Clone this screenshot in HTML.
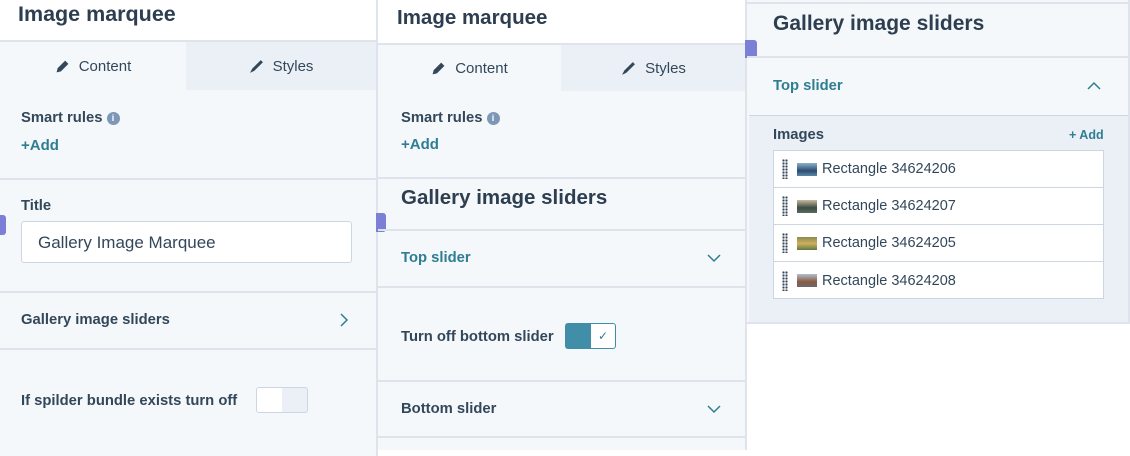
<!DOCTYPE html>
<html><head><style>
*{box-sizing:border-box;margin:0;padding:0}
body{width:1130px;height:456px;background:#fff;font-family:"Liberation Sans",sans-serif;color:#33475b;position:relative;overflow:hidden}
.a{position:absolute}
.h{font-weight:bold;color:#2d3e50}
.line{position:absolute;height:2px;background:#dfe3eb}
.b{font-weight:bold;font-size:14.8px;color:#33475b}
.teal{color:#2e7d93;font-weight:bold}
.tab{position:absolute;display:flex;align-items:center;justify-content:center;font-size:15px;color:#33475b;gap:9px}
.row{position:absolute;left:0;width:330px;height:37px;border-bottom:1px solid #cbd6e2;display:flex;align-items:center;font-size:14.5px;color:#33475b}
.dots{width:6px;height:20px;margin:0 9px 0 8px;background:radial-gradient(circle,#33475b 1px,transparent 1.3px) 0 0/3px 3px}
.thumb{width:20px;height:13px;margin-right:5px}
</style></head><body>
<!-- Panel 1 -->
<div class="a" style="left:0;top:0;width:376px;height:456px;background:#f5f8fa"></div>
<div class="a" style="left:0;top:0;width:376px;height:40px;background:#fff"></div>
<div class="a h" style="left:18px;top:2px;font-size:21.5px">Image marquee</div>
<div class="line" style="left:0;top:40px;width:376px"></div>
<div class="a" style="left:186px;top:42px;width:190px;height:48px;background:#eaf0f6"></div>
<div class="tab" style="left:0;top:42px;width:186px;height:48px"><svg width="15" height="15" viewBox="0 0 14 14"><path d="M1.5 12.5l1-4 7-7 3 3-7 7z" fill="#33475b"/></svg>Content</div>
<div class="tab" style="left:186px;top:42px;width:190px;height:48px"><svg width="15" height="15" viewBox="0 0 14 14"><path d="M1 13l2-4 8-8 2 2-8 8z" fill="#33475b"/></svg>Styles</div>
<div class="a b" style="left:21px;top:110px">Smart rules <span style="display:inline-block;width:13px;height:13px;border-radius:50%;background:#7c98b6;color:#fff;font-size:9px;text-align:center;line-height:13px;vertical-align:1px">i</span></div>
<div class="a teal" style="left:21px;top:137px;font-size:15px">+Add</div>
<div class="line" style="left:0;top:178px;width:376px"></div>
<div class="a b" style="left:21px;top:198px">Title</div>
<div class="a" style="left:21px;top:221px;width:331px;height:42px;background:#fff;border:1px solid #cbd6e2;border-radius:3px;font-size:17px;padding:11px 16px;color:#33475b">Gallery Image Marquee</div>
<div class="a" style="left:0;top:215px;width:6px;height:20px;background:#7b80d6;border-radius:0 3px 3px 0"></div>
<div class="line" style="left:0;top:291px;width:376px"></div>
<div class="a b" style="left:21px;top:312px">Gallery image sliders</div>
<svg class="a" style="left:339px;top:313px" width="10" height="14" viewBox="0 0 10 14"><path d="M2 1l6 6-6 6" stroke="#2e7d93" stroke-width="1.5" fill="none"/></svg>
<div class="line" style="left:0;top:348px;width:376px"></div>
<div class="a b" style="left:21px;top:393px">If spilder bundle exists turn off</div>
<div class="a" style="left:256px;top:387px;width:52px;height:26px;border:1px solid #cbd6e2;border-radius:3px;background:#eaf0f6"><div style="width:25px;height:24px;background:#fff;border-radius:2px 0 0 2px"></div></div>
<!-- Panel 2 -->
<div class="a" style="left:376px;top:0;width:2px;height:456px;background:#dfe3eb"></div>
<div class="a" style="left:378px;top:0;width:368px;height:450px;background:#f5f8fa"></div>
<div class="a" style="left:378px;top:0;width:368px;height:43px;background:#fff"></div>
<div class="a h" style="left:397px;top:6px;font-size:20.5px">Image marquee</div>
<div class="line" style="left:378px;top:43px;width:368px"></div>
<div class="a" style="left:561px;top:45px;width:185px;height:46px;background:#eaf0f6"></div>
<div class="tab" style="left:378px;top:45px;width:183px;height:46px"><svg width="15" height="15" viewBox="0 0 14 14"><path d="M1.5 12.5l1-4 7-7 3 3-7 7z" fill="#33475b"/></svg>Content</div>
<div class="tab" style="left:561px;top:45px;width:185px;height:46px"><svg width="15" height="15" viewBox="0 0 14 14"><path d="M1 13l2-4 8-8 2 2-8 8z" fill="#33475b"/></svg>Styles</div>
<div class="a b" style="left:401px;top:110px">Smart rules <span style="display:inline-block;width:13px;height:13px;border-radius:50%;background:#7c98b6;color:#fff;font-size:9px;text-align:center;line-height:13px;vertical-align:1px">i</span></div>
<div class="a teal" style="left:401px;top:136px;font-size:15px">+Add</div>
<div class="line" style="left:378px;top:177px;width:368px"></div>
<div class="a h" style="left:401px;top:186px;font-size:20.5px">Gallery image sliders</div>
<div class="a" style="left:376px;top:213px;width:10px;height:19px;background:#7b80d6;border-radius:0 3px 3px 0"></div>
<div class="line" style="left:378px;top:229px;width:368px"></div>
<div class="a teal" style="left:401px;top:250px;font-size:14.8px">Top slider</div>
<svg class="a" style="left:707px;top:253px" width="14" height="10" viewBox="0 0 14 10"><path d="M1 2l6 6 6-6" stroke="#2e7d93" stroke-width="1.5" fill="none"/></svg>
<div class="line" style="left:378px;top:286px;width:368px"></div>
<div class="a b" style="left:401px;top:329px">Turn off bottom slider</div>
<div class="a" style="left:565px;top:323px;width:51px;height:26px;border:1px solid #3f8ea8;border-radius:3px;background:#fff;display:flex"><div style="width:25px;height:24px;background:#418ea9"></div><div style="flex:1;text-align:center;color:#2e7d93;font-size:12px;line-height:24px">✓</div></div>
<div class="line" style="left:378px;top:380px;width:368px"></div>
<div class="a b" style="left:401px;top:401px">Bottom slider</div>
<svg class="a" style="left:707px;top:404px" width="14" height="10" viewBox="0 0 14 10"><path d="M1 2l6 6 6-6" stroke="#2e7d93" stroke-width="1.5" fill="none"/></svg>
<div class="line" style="left:378px;top:436px;width:368px"></div>
<div class="a" style="left:745px;top:0;width:2px;height:450px;background:#dfe3eb"></div>
<!-- Panel 3 -->
<div class="a" style="left:747px;top:0;width:383px;height:324px;background:#f5f8fa"></div>
<div class="line" style="left:747px;top:2px;width:383px"></div>
<div class="a h" style="left:773px;top:12px;font-size:21px">Gallery image sliders</div>
<div class="a" style="left:745px;top:40px;width:12px;height:18px;background:#7b80d6;border-radius:0 3px 3px 0"></div>
<div class="line" style="left:747px;top:56px;width:383px"></div>
<div class="a teal" style="left:773px;top:78px;font-size:14.8px">Top slider</div>
<svg class="a" style="left:1087px;top:81px" width="14" height="10" viewBox="0 0 14 10"><path d="M1 8l6-6 6 6" stroke="#2e7d93" stroke-width="1.5" fill="none"/></svg>
<div class="a" style="left:749px;top:115px;width:381px;height:208px;background:#eaf0f6;border-top:1px solid #cbd6e2"></div>
<div class="a b" style="left:773px;top:127px">Images</div>
<div class="a teal" style="left:1069px;top:128px;font-size:12.5px">+ Add</div>
<div class="a" style="left:773px;top:150px;width:331px;height:149px;background:#fff;border:1px solid #cbd6e2">
<div class="row" style="top:0"><div class="dots"></div><div class="thumb" style="background:linear-gradient(#8ab0d0,#2a4c6e 60%,#5b87a8)"></div>Rectangle 34624206</div>
<div class="row" style="top:37px"><div class="dots"></div><div class="thumb" style="background:linear-gradient(#c8b89a,#3b4c44 60%,#5a6a60)"></div>Rectangle 34624207</div>
<div class="row" style="top:74px"><div class="dots"></div><div class="thumb" style="background:linear-gradient(#8a8a50,#d0b060 50%,#607a40)"></div>Rectangle 34624205</div>
<div class="row" style="top:111px;border-bottom:none"><div class="dots"></div><div class="thumb" style="background:linear-gradient(#b0c0d0,#8a5a40 60%,#6a6a70)"></div>Rectangle 34624208</div>
</div>
<div class="line" style="left:747px;top:322px;width:383px"></div>
<div class="a" style="left:1128px;top:0;width:2px;height:324px;background:#dfe3eb"></div>
</body></html>
